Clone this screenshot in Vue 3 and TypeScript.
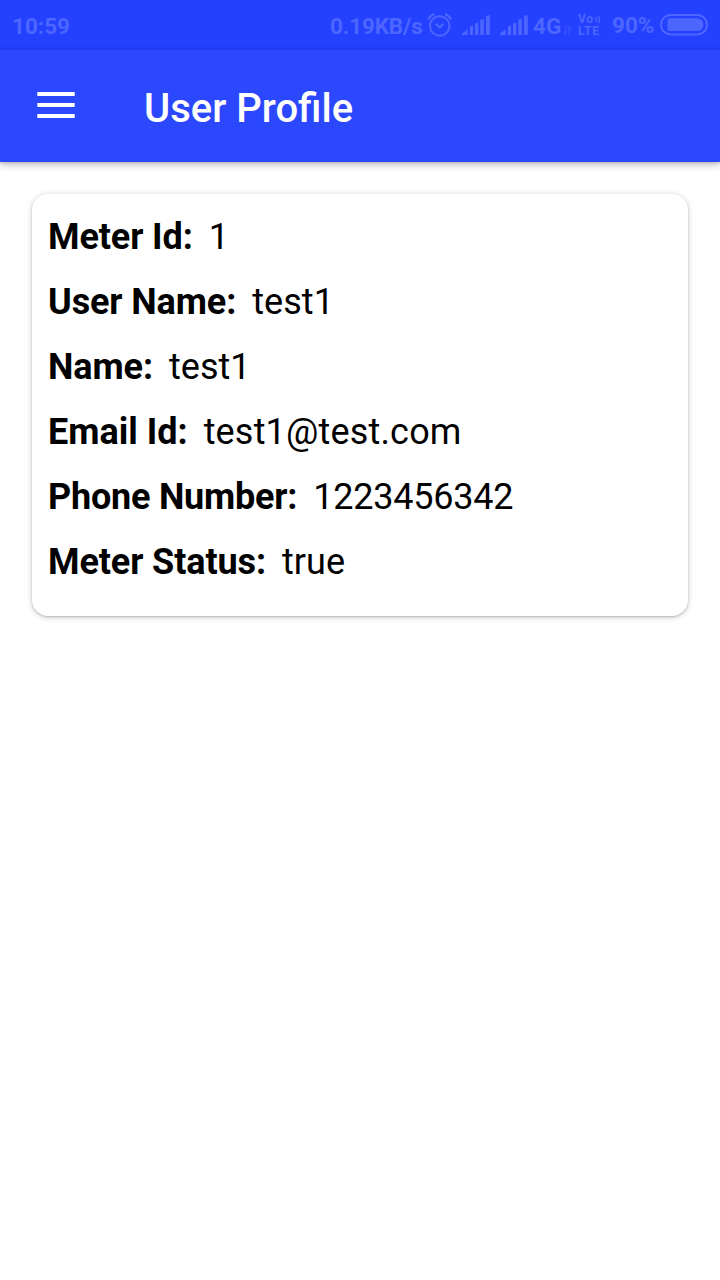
<script setup lang="ts">
interface Field {
  label: string
  value: string
  kind: 'text' | 'email' | 'phone'
}

const fields: Field[] = [
  { label: 'Meter Id:', value: '1', kind: 'text' },
  { label: 'User Name:', value: 'test1', kind: 'text' },
  { label: 'Name:', value: 'test1', kind: 'text' },
  { label: 'Email Id:', value: 'test1@test.com', kind: 'email' },
  { label: 'Phone Number:', value: '1223456342', kind: 'phone' },
  { label: 'Meter Status:', value: 'true', kind: 'text' },
]
</script>

<template>
  <div class="screen">
    <div class="status">
      <span class="time">10:59</span>
      <div class="indicators">
        <span class="speed">0.19KB/s</span>
        <svg class="alarm" width="26" height="26" viewBox="0 0 26 26" fill="none" stroke="currentColor" stroke-width="2">
          <circle cx="12.7" cy="14" r="9.7" />
          <path d="M8.8 11.8 12.7 15.4 16.6 11.8" stroke-width="2.2" />
          <path d="M1.3 7.4C2.5 5 4.7 3 7.4 2M24.1 7.4C22.9 5 20.7 3 18 2" stroke-width="2.2" />
        </svg>
        <svg v-for="n in 2" :key="n" class="signal" width="28" height="20" viewBox="0 0 28 20" fill="currentColor">
          <path d="M0 20v-1.6L5.6 14.4V20zM8 11.4l3-1V20H8zM13 8.4l3.3-1V20H13zM18.3 4.8l3.5-1V20h-3.5zM24 1l3.8-1V20H24z" />
        </svg>
        <span class="network">4G</span>
        <svg class="arrows" width="9" height="9" viewBox="0 0 9 9" fill="none" stroke="currentColor" stroke-width="1.4">
          <path d="M3 0v8L.6 5.4M6 9V1l2.4 2.6" />
        </svg>
        <div class="volte">
          <div class="vo">
            <span>Vo</span>
            <svg width="6" height="9" viewBox="0 0 6 9" fill="none" stroke="currentColor" stroke-width="1.3">
              <path d="M.7 2.4q1.5 2.1 0 4.2M3 .8q3 3.7 0 7.4" />
            </svg>
          </div>
          <span class="lte">LTE</span>
        </div>
        <span class="percent">90%</span>
        <svg class="battery" width="48" height="22" viewBox="0 0 48 22">
          <rect x="1" y="1" width="46" height="19.4" rx="9.7" fill="none" stroke="currentColor" stroke-width="2" />
          <path d="M9 4.2H37a6.4 6.4 0 0 1 0 12.8H9a1.5 1.5 0 0 1-1.5-1.5V5.7A1.5 1.5 0 0 1 9 4.2z" fill="currentColor" />
        </svg>
      </div>
    </div>

    <header class="toolbar">
      <svg class="menu" width="38" height="26" viewBox="0 0 38 26" fill="#fff">
        <path d="M.3 0h37.4v4H.3zM.3 11h37.4v4H.3zM.3 22h37.4v4H.3z" />
      </svg>
      <h1>User Profile</h1>
    </header>

    <main>
      <section class="card">
        <div v-for="field in fields" :key="field.label" class="row" :class="field.kind">
          <span class="label">{{ field.label }}</span>
          <span class="value">{{ field.value }}</span>
        </div>
      </section>
    </main>
  </div>
</template>

<style>
body {
  margin: 0;
}
</style>

<style scoped>
.screen {
  width: 720px;
  height: 1280px;
  overflow: hidden;
  background: #fff;
  color: #000;
  font-family: Roboto, "Liberation Sans", sans-serif;
}
.status {
  box-sizing: border-box;
  height: 50px;
  padding-left: 12px;
  display: flex;
  justify-content: space-between;
  background: #2341ff;
  color: #4d66ff;
  font-size: 22.5px;
  font-weight: 700;
  line-height: 52px;
  white-space: nowrap;
}
.indicators {
  width: 390px;
  display: flex;
  align-items: flex-start;
}
.indicators svg {
  display: block;
  flex: none;
}
.speed {
  width: 97px;
  flex: none;
  letter-spacing: -0.15px;
}
.indicators .alarm {
  margin-top: 12px;
  margin-right: 9px;
}
.indicators .signal {
  margin-top: 15px;
  margin-right: 10px;
}
.network {
  width: 30px;
  flex: none;
  margin-left: -5px;
}
.indicators .arrows {
  margin-top: 26px;
  opacity: 0.5;
}
.volte {
  flex: none;
  width: 23px;
  margin: 13px 11px 0 6px;
}
.vo {
  display: flex;
  gap: 1px;
  height: 12px;
  font-size: 12px;
  line-height: 12px;
  letter-spacing: 0.6px;
}
.vo svg {
  margin-top: 2px;
}
.lte {
  display: block;
  font-size: 12px;
  line-height: 12px;
  letter-spacing: 0.8px;
}
.percent {
  flex: none;
  width: 48px;
  line-height: 50px;
}
.indicators .battery {
  margin-top: 14px;
}
.toolbar {
  height: 112px;
  display: flex;
  align-items: flex-start;
  background: #2b48ff;
  box-shadow: 0 3px 8px rgba(0, 0, 0, 0.22), 0 1px 3px rgba(0, 0, 0, 0.16);
}
.menu {
  margin: 42px 69px 0 37px;
}
h1 {
  margin: 35px 0 0;
  color: #fff;
  font-size: 40px;
  font-weight: 500;
  line-height: 48px;
}
main {
  padding: 32px;
}
.card {
  box-sizing: border-box;
  height: 422px;
  padding: 11px 16px;
  border-radius: 16px;
  background: #fff;
  box-shadow: 0 1px 6px rgba(0, 0, 0, 0.2), 0 1px 2px rgba(0, 0, 0, 0.18);
}
.row {
  height: 65px;
  display: flex;
  gap: 16px;
  font-size: 36px;
  line-height: 65px;
}
.label {
  font-weight: 700;
  letter-spacing: -0.1px;
}
.value {
  letter-spacing: 0.05px;
}
.email .label {
  letter-spacing: 0;
}
.email .value {
  letter-spacing: 0.18px;
}
.phone .label {
  letter-spacing: -0.22px;
}
.phone .value {
  letter-spacing: -0.22px;
}
</style>
